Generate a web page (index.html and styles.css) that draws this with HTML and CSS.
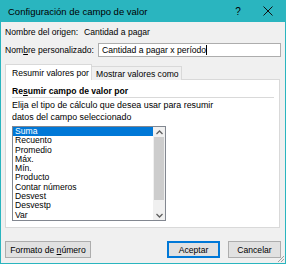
FILE: index.html
```html
<!DOCTYPE html>
<html>
  <head>
    <meta charset='utf-8'>
    <title>Configuración de campo de valor</title>
    <link rel="stylesheet" href="styles.css">
  </head>
  <body>
    <div class='window'>
      <div class='titlebar'>
        <span class='title'>Configuración de campo de valor</span>
        <span class='help'>?</span>
        <span class='close'>
          <svg width='10' height='10' viewBox='0 0 10 10'><path d='M0.5 0.5 L9.5 9.5 M9.5 0.5 L0.5 9.5' stroke='#111' stroke-width='1' fill='none'/></svg>
        </span>
      </div>
      <div class='content'>
        <div class='row'>
          <span class='label'>Nombre del origen:</span>
          <span class='source'>Cantidad a pagar</span>
        </div>
        <div class='row'>
          <span class='label long'>Nom<u>b</u>re personalizado:</span>
          <div class='input'>Cantidad a pagar x período<span class='caret'></span></div>
        </div>
        <div class='tabs'>
          <div class='tab active'>Resumir valores por</div>
          <div class='tab'>Mostrar valores como</div>
        </div>
        <div class='panel'>
          <div class='section'>Re<u>s</u>umir campo de valor por</div>
          <div class='hint'>Elija el tipo de cálculo que desea usar para resumir<br>datos del campo seleccionado</div>
          <div class='listbox'>
            <div class='items'>
              <div class='item selected'>Suma</div>
              <div class='item'>Recuento</div>
              <div class='item'>Promedio</div>
              <div class='item'>Máx.</div>
              <div class='item'>Mín.</div>
              <div class='item'>Producto</div>
              <div class='item'>Contar números</div>
              <div class='item'>Desvest</div>
              <div class='item'>Desvestp</div>
              <div class='item'>Var</div>
            </div>
            <div class='scrollbar'>
              <div class='arrow'>
                <svg width='7' height='5' viewBox='0 0 7 5'><path d='M0.5 4 L3.5 1 L6.5 4' stroke='#606060' stroke-width='1.3' fill='none'/></svg>
              </div>
              <div class='track'><div class='thumb'></div></div>
              <div class='arrow'>
                <svg width='7' height='5' viewBox='0 0 7 5'><path d='M0.5 1 L3.5 4 L6.5 1' stroke='#606060' stroke-width='1.3' fill='none'/></svg>
              </div>
            </div>
          </div>
        </div>
        <div class='footer'>
          <div class='button wide'><span>Formato de <u>n</u>úmero</span></div>
          <div class='spacer'></div>
          <div class='button default'>Aceptar</div>
          <div class='button'>Cancelar</div>
        </div>
      </div>
      <svg class='grip' width='8' height='8' viewBox='0 0 8 8'>
        <path d='M7 1 L1 7 M7 4 L4 7' stroke='#a0a0a0' stroke-width='1' fill='none'/>
      </svg>
    </div>
  </body>
</html>
```

FILE: styles.css
```css
body {
  margin: 0;
  font-family: "Liberation Sans", Arial, sans-serif;
  font-size: 8.6px;
  color: #000;
}

.window {
  position: relative;
  width: 286px;
  height: 264px;
  box-sizing: border-box;
  border: 1px solid #2ab5bf;
  border-top: none;
  background: #f0f0f0;
  display: flex;
  flex-direction: column;
  white-space: nowrap;
}

.titlebar {
  height: 22px;
  margin: 0 -1px;
  background: #2ab5bf;
  display: flex;
  align-items: center;
  padding-left: 8px;
  font-size: 9.5px;
}

.title {
  flex: 1;
}

.help {
  width: 14px;
  font-size: 10px;
  margin-right: 18px;
  text-align: center;
}

.close {
  display: flex;
  margin-right: 13px;
}

.content {
  flex: 1;
  padding: 2px 4px 0 4px;
  display: flex;
  flex-direction: column;
}

.row {
  height: 16px;
  display: flex;
  align-items: center;
  margin-bottom: 2px;
}

.label {
  width: 79px;
}

.label.long {
  width: 93px;
}

.input {
  flex: 1;
  height: 14px;
  box-sizing: border-box;
  border: 1px solid #adadad;
  background: #fff;
  padding-left: 3px;
  display: flex;
  align-items: center;
}

.caret {
  width: 1px;
  height: 10px;
  background: #000;
}

.tabs {
  margin-top: 4px;
  display: flex;
  align-items: flex-end;
  height: 16px;
  position: relative;
  z-index: 1;
  margin-bottom: -1px;
}

.tab {
  height: 14px;
  box-sizing: border-box;
  border: 1px solid #d9d9d9;
  border-bottom: none;
  padding: 0 4px;
  display: flex;
  align-items: center;
  background: #f0f0f0;
  width: 90px;
}

.tab.active {
  height: 16px;
  background: #fff;
  width: 87px;
  padding: 0 6px;
}

.tab + .tab {
  border-left: none;
}

.panel {
  width: 275px;
  height: 149px;
  box-sizing: border-box;
  border: 1px solid #d9d9d9;
  background: #fff;
  padding: 6px 5px 0 6px;
}

.section {
  font-weight: bold;
  height: 11px;
  line-height: 11px;
  border-bottom: 1px solid #d9d9d9;
}

.hint {
  margin-top: 1px;
  line-height: 12px;
  font-size: 8.9px;
}

.listbox {
  margin-top: 3px;
  width: 154px;
  height: 95px;
  box-sizing: border-box;
  border: 1px solid #828790;
  display: flex;
}

.items {
  flex: 1;
  overflow: hidden;
}

.item {
  height: 9.3px;
  line-height: 9.3px;
  padding-left: 2px;
}

.item.selected {
  background: #0078d7;
  color: #fff;
}

.scrollbar {
  width: 12px;
  background: #f0f0f0;
  display: flex;
  flex-direction: column;
}

.arrow {
  height: 10px;
  display: flex;
  align-items: center;
  justify-content: center;
}

.track {
  flex: 1;
  padding: 0 1px;
}

.thumb {
  height: 63px;
  background: #cdcdcd;
}

.footer {
  margin-top: 13px;
  display: flex;
  gap: 8px;
}

.spacer {
  flex: 1;
}

.button {
  height: 17px;
  width: 53px;
  box-sizing: border-box;
  border: 1px solid #adadad;
  background: #e1e1e1;
  display: flex;
  align-items: center;
  justify-content: center;
}

.button.wide {
  width: 86px;
}

.button.default {
  border: 2px solid #0078d7;
}

.grip {
  position: absolute;
  right: 0;
  bottom: 0;
}
```
